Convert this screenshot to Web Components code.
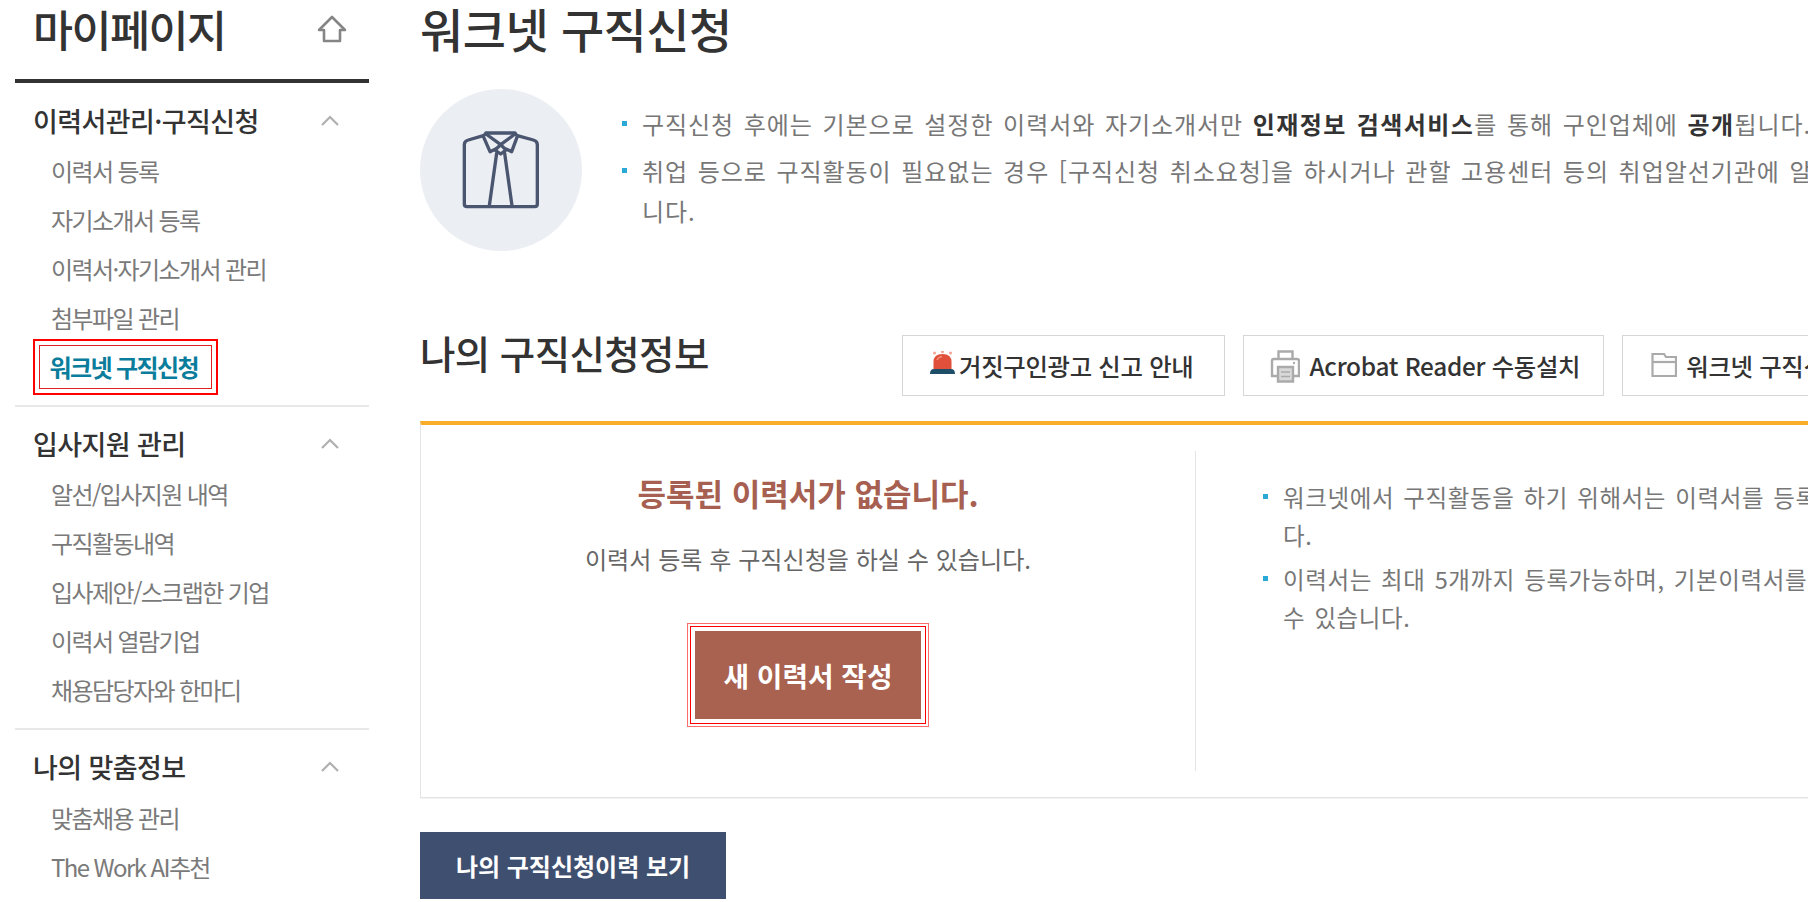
<!DOCTYPE html>
<html lang="ko">
<head>
<meta charset="utf-8">
<title>워크넷 구직신청</title>
<style>
    html, body { margin: 0; height: 100%; background: #fff; overflow: hidden; }
    body { font-family: "Noto Sans CJK KR", "Noto Sans", sans-serif; }
    side-menu { flex: none; }
    main-area { flex: none; }
    #page { display: flex; width: 1808px; height: 902px; overflow: hidden; }
</style>
</head>
<body>
<div id="page">
    <side-menu>
        <menu-group label="이력서관리·구직신청">
            <menu-item>이력서 등록</menu-item>
            <menu-item>자기소개서 등록</menu-item>
            <menu-item>이력서·자기소개서 관리</menu-item>
            <menu-item>첨부파일 관리</menu-item>
            <menu-item current>워크넷 구직신청</menu-item>
        </menu-group>
        <menu-group label="입사지원 관리">
            <menu-item>알선/입사지원 내역</menu-item>
            <menu-item>구직활동내역</menu-item>
            <menu-item>입사제안/스크랩한 기업</menu-item>
            <menu-item>이력서 열람기업</menu-item>
            <menu-item>채용담당자와 한마디</menu-item>
        </menu-group>
        <menu-group label="나의 맞춤정보" last>
            <menu-item>맞춤채용 관리</menu-item>
            <menu-item>The Work AI추천</menu-item>
        </menu-group>
    </side-menu>
    <main-area>
        <notice-box>
            <bullet-item>구직신청 후에는 기본으로 설정한 이력서와 자기소개서만 <b>인재정보 검색서비스</b>를 통해 구인업체에 <b>공개</b>됩니다.</bullet-item>
            <bullet-item>취업 등으로 구직활동이 필요없는 경우 [구직신청 취소요청]을 하시거나 관할 고용센터 등의 취업알선기관에 알려주시기 바랍<br>니다.</bullet-item>
        </notice-box>
        <section-head>
            <tool-button icon="siren" tight>거짓구인광고 신고 안내</tool-button>
            <tool-button icon="printer">Acrobat Reader 수동설치</tool-button>
            <tool-button icon="folder">워크넷 구직신청 안내</tool-button>
        </section-head>
        <resume-panel>
            <bullet-item wide>워크넷에서 구직활동을 하기 위해서는 이력서를 등록하셔야 합니<br>다.</bullet-item>
            <bullet-item wide>이력서는 최대 5개까지 등록가능하며, 기본이력서를 변경하실<br>수 있습니다.</bullet-item>
        </resume-panel>
        <history-button>나의 구직신청이력 보기</history-button>
    </main-area>
</div>

<script>
const FONT = '"Noto Sans CJK KR", "Noto Sans", sans-serif';

class SideMenu extends HTMLElement {
    constructor() {
        super();
        this.attachShadow({ mode: 'open' });
        this.shadowRoot.innerHTML = `
            <style>
                :host { display: block; width: 354px; margin-left: 15px; font-family: ${FONT}; }
                header {
                    display: flex;
                    align-items: center;
                    justify-content: space-between;
                    padding: 0 22px 22px 18px;
                    box-sizing: border-box;
                    border-bottom: 4px solid #333;
                    height: 83px;
                    margin-bottom: 1px;
                }
                h1 { margin: 0; font-size: 43.5px; font-weight: 500; letter-spacing: -1.5px; color: #333; line-height: 56px; }
                svg { display: block; }
            </style>
            <header>
                <h1>마이페이지</h1>
                <svg width="30" height="30" viewBox="0 0 30 30" fill="none" stroke="#858585" stroke-width="2.6" stroke-linejoin="round">
                    <path d="M15 3 L28 16 H23 V27 H7 V16 H2 Z"/>
                </svg>
            </header>
            <slot></slot>
        `;
    }
}

class MenuGroup extends HTMLElement {
    constructor() {
        super();
        this.attachShadow({ mode: 'open' });
        this.shadowRoot.innerHTML = `
            <style>
                :host { display: block; border-bottom: 2px solid #e8e8e8; padding: 14px 0 14px; font-family: ${FONT}; }
                :host([last]) { border-bottom: 0; }
                .head {
                    display: flex;
                    align-items: center;
                    justify-content: space-between;
                    height: 44px;
                    padding: 0 29px 0 18px;
                    margin-bottom: 4px;
                }
                :host([last]) .head { margin-bottom: 5px; }
                span { font-size: 27px; font-weight: 500; letter-spacing: -0.6px; color: #333; }
                svg { display: block; }
            </style>
            <div class="head">
                <span></span>
                <svg width="20" height="12" viewBox="0 0 20 12" fill="none" stroke="#b0b0b0" stroke-width="2.2"><path d="M2 11 L10 3 L18 11"/></svg>
            </div>
            <slot></slot>
        `;
        this.shadowRoot.querySelector('span').textContent = this.getAttribute('label');
    }
}

class MenuItem extends HTMLElement {
    constructor() {
        super();
        const current = this.hasAttribute('current');
        this.attachShadow({ mode: 'open' });
        this.shadowRoot.innerHTML = `
            <style>
                :host {
                    display: block;
                    height: 49px;
                    padding-left: 36px;
                    font-size: 24px;
                    line-height: 49px;
                    letter-spacing: -1.6px;
                    color: #7a7a7a;
                    font-family: ${FONT};
                    white-space: nowrap;
                }
                :host([current]) { display: flex; align-items: center; padding-left: 18px; color: #0a7d9c; font-weight: 700; }
                .outer { border: 2px solid #f00; padding: 4px; }
                .inner { display: block; border: 1.5px solid #e02020; height: 44px; box-sizing: border-box; line-height: 41px; padding: 0 13px 0 9.5px; }
            </style>
            ${current ? '<div class="outer"><span class="inner"><slot></slot></span></div>' : '<slot></slot>'}
        `;
    }
}

class MainArea extends HTMLElement {
    constructor() {
        super();
        this.attachShadow({ mode: 'open' });
        this.shadowRoot.innerHTML = `
            <style>
                :host { display: block; width: 1700px; margin-left: 51px; font-family: ${FONT}; }
                h2 { margin: 0; height: 89px; font-size: 47px; font-weight: 500; letter-spacing: -0.5px; color: #333; line-height: 56px; }
            </style>
            <h2>워크넷 구직신청</h2>
            <slot></slot>
        `;
    }
}

class NoticeBox extends HTMLElement {
    constructor() {
        super();
        this.attachShadow({ mode: 'open' });
        this.shadowRoot.innerHTML = `
            <style>
                :host { display: flex; gap: 40px; height: 246px; }
                .circle {
                    flex: none;
                    width: 162px;
                    height: 162px;
                    border-radius: 50%;
                    background: #ebeef2;
                    display: flex;
                    align-items: center;
                    justify-content: center;
                }
                .list { width: 1500px; flex: none; padding-top: 15px; }
            </style>
            <div class="circle">
                <svg width="82" height="82" viewBox="180 175 246 246" fill="none" stroke="#4a566f" stroke-width="10" stroke-linejoin="round" stroke-linecap="round">
                    <path d="M250 195 L205 208 Q193 211 193 222 V400 Q193 408 201 408 H404 Q412 408 412 400 V222 Q412 211 400 208 L352 195"/>
                    <path d="M258 187 H345 L352 197 L335 243 L318 235 M258 187 L250 197 L270 243 L287 235"/>
                    <path d="M258 190 L302 222 L345 190"/>
                    <path d="M302 222 L285 238 L302 250 L318 238 Z"/>
                    <path d="M290 248 L268 405 M314 248 L336 405"/>
                </svg>
            </div>
            <div class="list"><slot></slot></div>
        `;
    }
}

class BulletItem extends HTMLElement {
    constructor() {
        super();
        this.attachShadow({ mode: 'open' });
        this.shadowRoot.innerHTML = `
            <style>
                :host {
                    display: block;
                    position: relative;
                    padding-left: 20px;
                    margin-bottom: 7px;
                    font-size: 24px;
                    letter-spacing: 0.95px;
                    word-spacing: 2px;
                    line-height: 40px;
                    color: #777;
                    white-space: nowrap;
                }
                :host([wide]) { line-height: 38px; margin-bottom: 6px; font-size: 23.5px; letter-spacing: 0.6px; }
                i { position: absolute; left: 0; top: 17px; width: 5px; height: 5px; background: #2aa9d6; }
                :host([wide]) i { top: 16px; }
                ::slotted(b) { color: #333; font-weight: 700; letter-spacing: 1.4px; }
            </style>
            <i></i><slot></slot>
        `;
    }
}

class SectionHead extends HTMLElement {
    constructor() {
        super();
        this.attachShadow({ mode: 'open' });
        this.shadowRoot.innerHTML = `
            <style>
                :host { display: flex; align-items: flex-start; height: 86px; }
                h3 { margin: 0; width: 482px; flex: none; font-size: 38.5px; font-weight: 500; letter-spacing: -0.6px; color: #333; line-height: 34px; }
                div { display: flex; gap: 18px; }
            </style>
            <h3>나의 구직신청정보</h3>
            <div><slot></slot></div>
        `;
    }
}

const TOOL_ICONS = {
    siren: `<svg width="30" height="30" viewBox="0 0 30 30">
        <path d="M1 23 Q1 18 5 18 H22 Q26 18 26 23 Z" fill="#1f4e68"/>
        <path d="M4.500 18 V11 Q4.500 3 13.500 3 Q22.500 3 22.500 11 V18 Z" fill="#e0503a"/>
        <path d="M8 9 Q9.500 6 13 5.500" fill="none" stroke="#f08c78" stroke-width="1.500"/>
        <circle cx="5.500" cy="2" r="1.500" fill="#f2a494"/>
        <circle cx="13.500" cy="0.800" r="1.500" fill="#f2a494"/>
        <circle cx="21.500" cy="2" r="1.500" fill="#f2a494"/>
    </svg>`,
    printer: `<svg width="30" height="34" viewBox="0 0 30 34" fill="none" stroke="#aaa" stroke-width="2.4">
        <path d="M8.500 9 V2.500 H22.500 V9"/>
        <path d="M8 27 H2 V12 Q2 10 4 10 H27 Q29 10 29 12 V27 H23"/>
        <path d="M8 18 H23 V32.500 H8 Z" fill="#d8d8d8"/>
        <path d="M11 23 H20 M11 27.500 H20" stroke-width="1.600"/>
        <circle cx="24" cy="14" r="1.200" fill="#aaa" stroke="none"/>
    </svg>`,
    folder: `<svg width="28" height="28" viewBox="0 0 28 28" fill="none" stroke="#aaa" stroke-width="2.2">
        <path d="M3.500 2 H15 L17 5 H27 V24 H3.500 Z" fill="#fdfdfd"/>
        <path d="M3.500 10 H27"/>
    </svg>`
};

class ToolButton extends HTMLElement {
    constructor() {
        super();
        this.attachShadow({ mode: 'open' });
        this.shadowRoot.innerHTML = `
            <style>
                :host {
                    display: flex;
                    flex: none;
                    align-items: center;
                    gap: 9px;
                    height: 61px;
                    padding: 0 23px 0 26px;
                    box-sizing: border-box;
                    border: 1px solid #d6d6d6;
                    font-size: 24.4px;
                    font-weight: 500;
                    color: #333;
                    white-space: nowrap;
                    letter-spacing: -0.3px;
                }
                :host([tight]) { gap: 0; padding-right: 31px; }
                svg { display: block; }
            </style>
            ${TOOL_ICONS[this.getAttribute('icon')]}
            <slot></slot>
        `;
    }
}

class ResumePanel extends HTMLElement {
    constructor() {
        super();
        this.attachShadow({ mode: 'open' });
        this.shadowRoot.innerHTML = `
            <style>
                :host {
                    display: flex;
                    height: 377px;
                    box-sizing: border-box;
                    border-top: 4px solid #f9ae2b;
                    border-left: 1px solid #e4e4e4;
                    border-bottom: 1px solid #e4e4e4;
                    box-shadow: 0 1px 0 #f3f3f3;
                    padding-top: 26px;
                }
                .left {
                    flex: none;
                    width: 775px;
                    height: 320px;
                    border-right: 1px solid #e4e4e4;
                    text-align: center;
                    box-sizing: border-box;
                }
                h4 { margin: 22px 0 0; font-size: 31px; font-weight: 700; line-height: 40px; color: #a65f50; }
                p { margin: 26px 0 0; font-size: 24.1px; line-height: 40px; color: #666; }
                .ring1 { display: inline-block; margin-top: 44px; border: 1px solid #ff6a6a; padding: 2px; }
                .ring2 { border: 1.5px solid #f00; padding: 4px; }
                .fill {
                    display: flex;
                    align-items: center;
                    justify-content: center;
                    width: 226px;
                    height: 88px;
                    background: #a96150;
                    color: #fff;
                    font-size: 27.8px;
                    font-weight: 700;
                }
                .right { width: 760px; padding: 27px 0 0 67px; flex: none; }
            </style>
            <div class="left">
                <h4>등록된 이력서가 없습니다.</h4>
                <p>이력서 등록 후 구직신청을 하실 수 있습니다.</p>
                <div class="ring1"><div class="ring2"><div class="fill">새 이력서 작성</div></div></div>
            </div>
            <div class="right"><slot></slot></div>
        `;
    }
}

class HistoryButton extends HTMLElement {
    constructor() {
        super();
        this.attachShadow({ mode: 'open' });
        this.shadowRoot.innerHTML = `
            <style>
                :host {
                    display: flex;
                    align-items: center;
                    justify-content: center;
                    width: 306px;
                    height: 67px;
                    margin-top: 34px;
                    background: #3f4f70;
                    color: #fff;
                    font-size: 24px;
                    font-weight: 700;
                }
            </style>
            <slot></slot>
        `;
    }
}

customElements.define('side-menu', SideMenu);
customElements.define('menu-group', MenuGroup);
customElements.define('menu-item', MenuItem);
customElements.define('main-area', MainArea);
customElements.define('notice-box', NoticeBox);
customElements.define('bullet-item', BulletItem);
customElements.define('section-head', SectionHead);
customElements.define('tool-button', ToolButton);
customElements.define('resume-panel', ResumePanel);
customElements.define('history-button', HistoryButton);
</script>
</body>
</html>
